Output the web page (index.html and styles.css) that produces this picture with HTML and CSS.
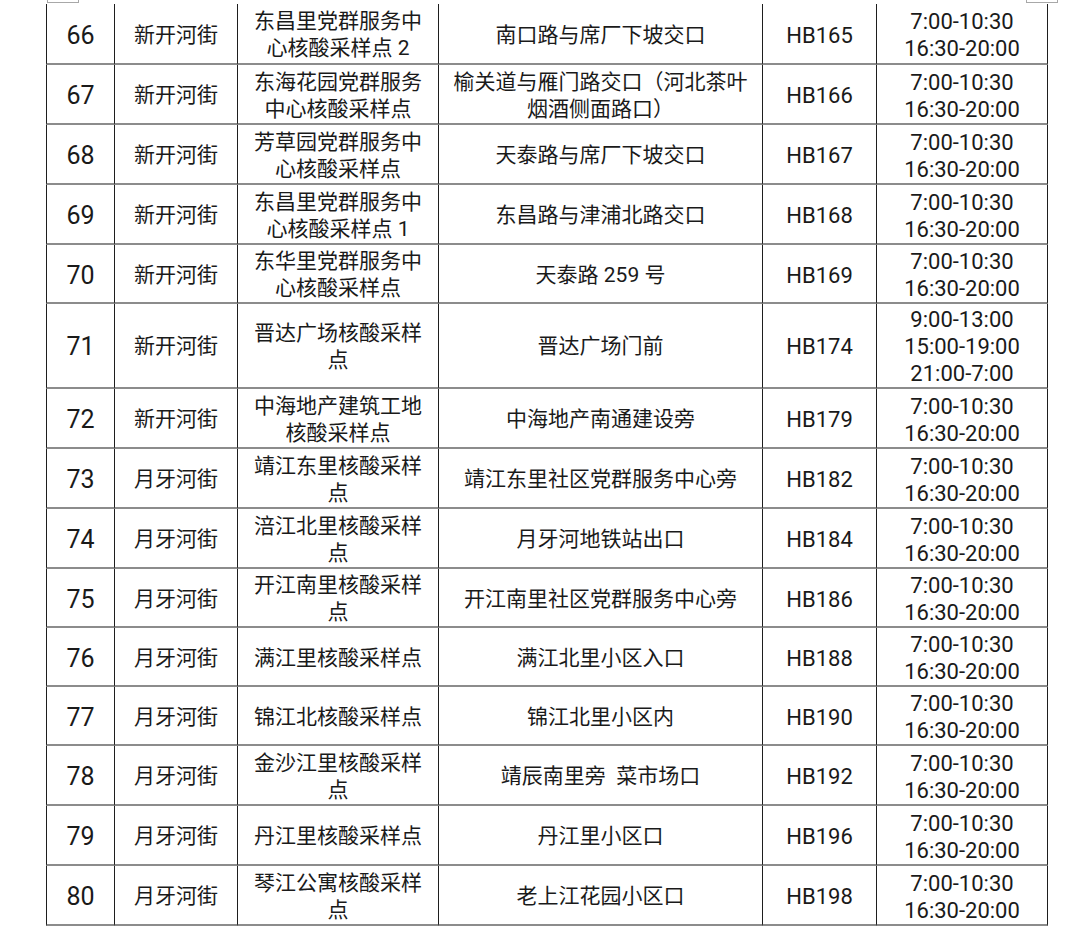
FILE: index.html
```html
<!DOCTYPE html>
<html lang="zh">
<head>
<meta charset="utf-8">
<link rel="stylesheet" href="styles.css">
</head>
<body>
<div class="page">
  <div class="marks"><span class="mark"></span><span class="mark"></span></div>
  <table class="sheet">
    <colgroup>
      <col class="c-no"><col class="c-street"><col class="c-name"><col class="c-addr"><col class="c-code"><col class="c-time">
    </colgroup>
    <tbody>
      <tr class="first"><td class="no">66</td><td>新开河街</td><td>东昌里党群服务中心核酸采样点 2</td><td>南口路与席厂下坡交口</td><td>HB165</td><td>7:00-10:30<br>16:30-20:00</td></tr>
      <tr><td class="no">67</td><td>新开河街</td><td>东海花园党群服务中心核酸采样点</td><td>榆关道与雁门路交口（河北茶叶烟酒侧面路口）</td><td>HB166</td><td>7:00-10:30<br>16:30-20:00</td></tr>
      <tr><td class="no">68</td><td>新开河街</td><td>芳草园党群服务中心核酸采样点</td><td>天泰路与席厂下坡交口</td><td>HB167</td><td>7:00-10:30<br>16:30-20:00</td></tr>
      <tr><td class="no">69</td><td>新开河街</td><td>东昌里党群服务中心核酸采样点 1</td><td>东昌路与津浦北路交口</td><td>HB168</td><td>7:00-10:30<br>16:30-20:00</td></tr>
      <tr class="short"><td class="no">70</td><td>新开河街</td><td>东华里党群服务中心核酸采样点</td><td>天泰路 259 号</td><td>HB169</td><td>7:00-10:30<br>16:30-20:00</td></tr>
      <tr class="tall"><td class="no">71</td><td>新开河街</td><td>晋达广场核酸采样点</td><td>晋达广场门前</td><td>HB174</td><td>9:00-13:00<br>15:00-19:00<br>21:00-7:00</td></tr>
      <tr><td class="no">72</td><td>新开河街</td><td>中海地产建筑工地核酸采样点</td><td>中海地产南通建设旁</td><td>HB179</td><td>7:00-10:30<br>16:30-20:00</td></tr>
      <tr><td class="no">73</td><td>月牙河街</td><td>靖江东里核酸采样点</td><td>靖江东里社区党群服务中心旁</td><td>HB182</td><td>7:00-10:30<br>16:30-20:00</td></tr>
      <tr><td class="no">74</td><td>月牙河街</td><td>涪江北里核酸采样点</td><td>月牙河地铁站出口</td><td>HB184</td><td>7:00-10:30<br>16:30-20:00</td></tr>
      <tr class="short"><td class="no">75</td><td>月牙河街</td><td>开江南里核酸采样点</td><td>开江南里社区党群服务中心旁</td><td>HB186</td><td>7:00-10:30<br>16:30-20:00</td></tr>
      <tr class="short"><td class="no">76</td><td>月牙河街</td><td>满江里核酸采样点</td><td>满江北里小区入口</td><td>HB188</td><td>7:00-10:30<br>16:30-20:00</td></tr>
      <tr class="short"><td class="no">77</td><td>月牙河街</td><td>锦江北核酸采样点</td><td>锦江北里小区内</td><td>HB190</td><td>7:00-10:30<br>16:30-20:00</td></tr>
      <tr><td class="no">78</td><td>月牙河街</td><td>金沙江里核酸采样点</td><td>靖辰南里旁&nbsp;&nbsp;菜市场口</td><td>HB192</td><td>7:00-10:30<br>16:30-20:00</td></tr>
      <tr><td class="no">79</td><td>月牙河街</td><td>丹江里核酸采样点</td><td>丹江里小区口</td><td>HB196</td><td>7:00-10:30<br>16:30-20:00</td></tr>
      <tr><td class="no">80</td><td>月牙河街</td><td>琴江公寓核酸采样点</td><td>老上江花园小区口</td><td>HB198</td><td>7:00-10:30<br>16:30-20:00</td></tr>
    </tbody>
  </table>
</div>
</body>
</html>
```

FILE: styles.css
```css
html, body {
  margin: 0;
  padding: 0;
  background: #ffffff;
}

.page {
  width: 1080px;
  height: 931px;
  overflow: hidden;
  padding-left: 46px;
  box-sizing: border-box;
}

.marks {
  display: flex;
  justify-content: space-between;
  width: 1012px;
  height: 4px;
  padding-left: 1px;
  box-sizing: border-box;
}

.mark {
  display: block;
  width: 32px;
  height: 3px;
  border: 1px solid #a8a8a8;
  border-top: none;
  box-sizing: border-box;
}

.sheet {
  border-collapse: separate;
  border-spacing: 0;
  table-layout: fixed;
  width: 1002px;
  font-family: "Roboto", "Noto Sans CJK SC", sans-serif;
  font-size: 21px;
  line-height: 27px;
  color: #1a1a1a;
}

.c-no { width: 69px; }
.c-street { width: 123px; }
.c-name { width: 201px; }
.c-addr { width: 324px; }
.c-code { width: 114px; }
.c-time { width: 171px; }

.sheet td {
  height: 60px;
  padding: 3px 10px 0;
  text-align: center;
  vertical-align: middle;
  border-right: 1px solid #1e1e1e;
  border-bottom: 2px solid #8c8c8c;
  box-sizing: border-box;
}

.sheet td:first-child {
  border-left: 1px solid #1e1e1e;
}

.sheet tr.first td {
  height: 61px;
}

.sheet tr.short td {
  height: 59px;
}

.sheet tr.tall td {
  height: 85px;
  padding-top: 2px;
}

.sheet td.no {
  font-size: 25px;
  padding-left: 4px;
  padding-right: 4px;
}

.sheet td:nth-child(5),
.sheet td:nth-child(6) {
  font-size: 22px;
}
```
